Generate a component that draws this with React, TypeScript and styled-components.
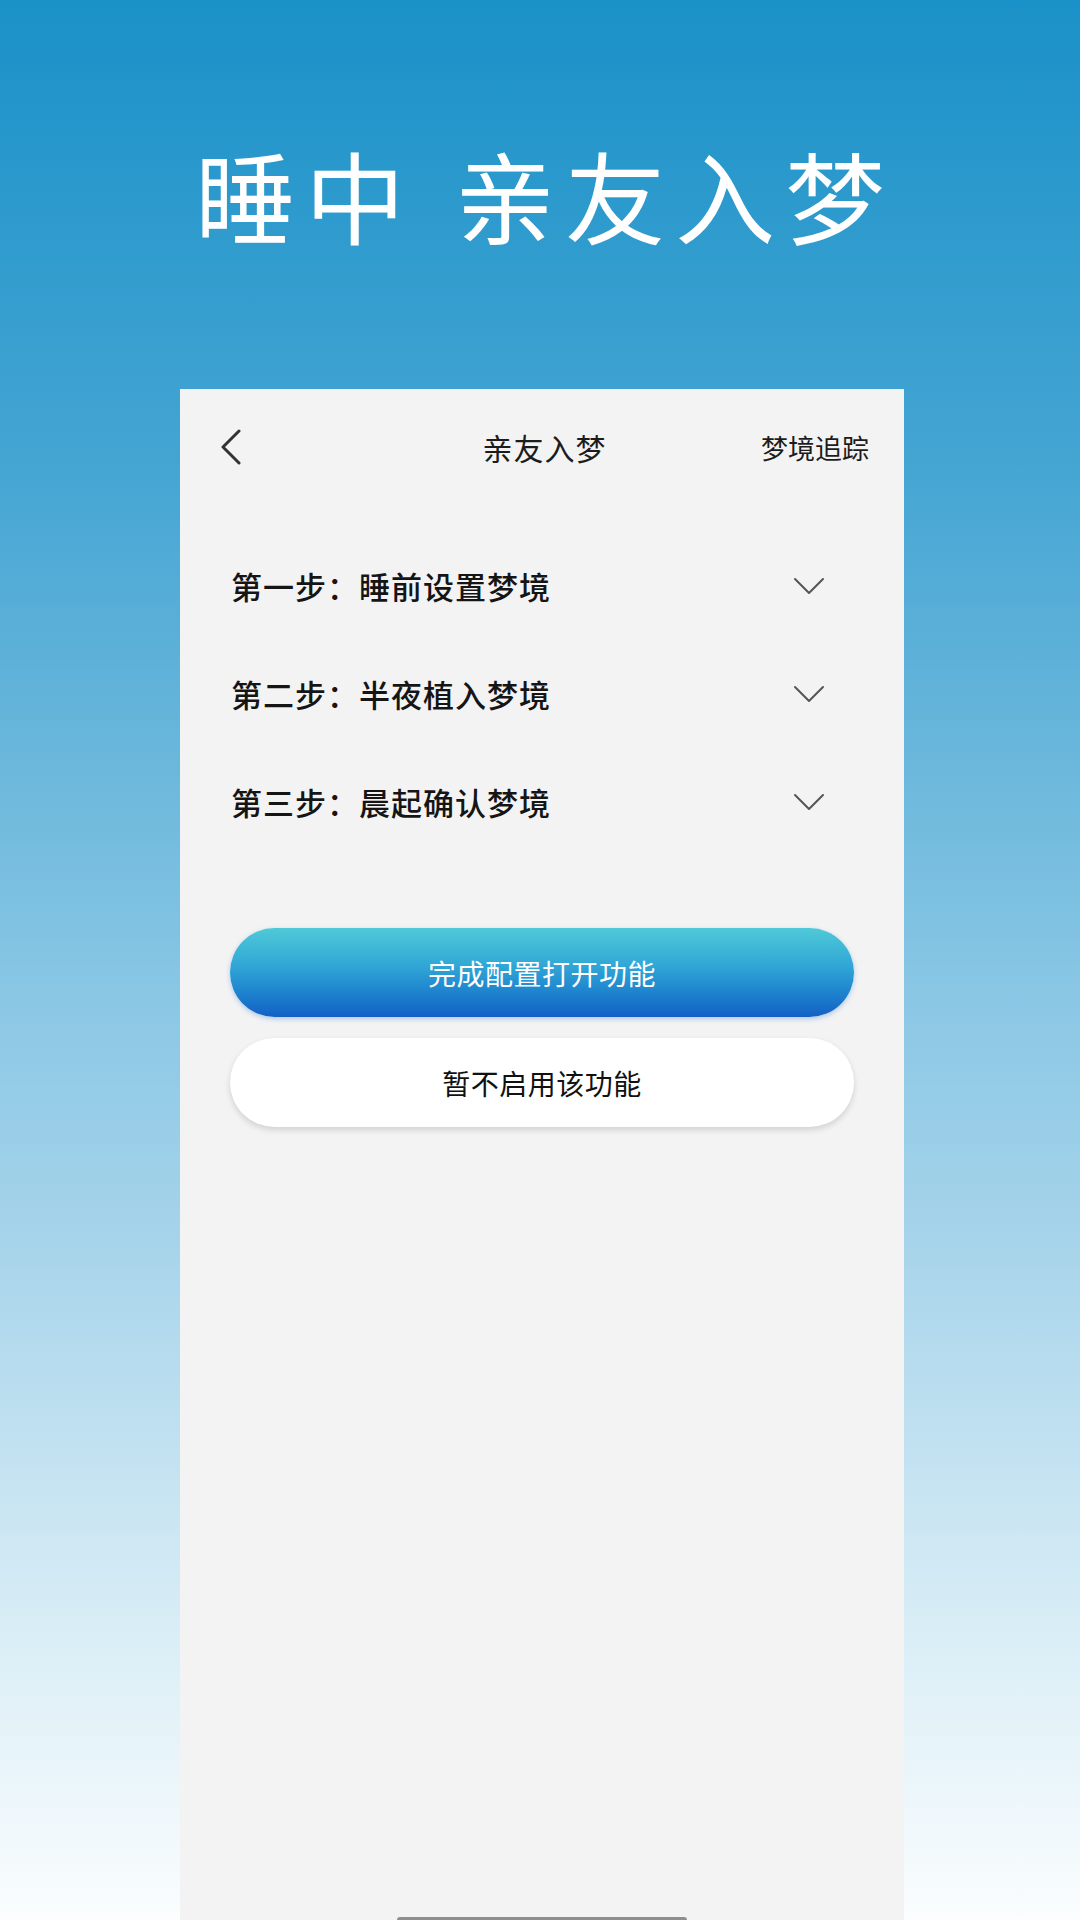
import * as React from 'react';
import styled, { createGlobalStyle } from 'styled-components';

const GlobalStyle = createGlobalStyle`
  html, body {
    margin: 0;
    padding: 0;
  }
  body {
    font-family: "Noto Sans CJK SC", "Noto Sans", sans-serif;
  }
`;

const Page = styled.div`
  width: 1080px;
  height: 1920px;
  display: flex;
  flex-direction: column;
  overflow: hidden;
  background: linear-gradient(
    180deg,
    #1a91c8 0%,
    #44a5d3 24%,
    #70badd 42%,
    #8ac7e5 52%,
    #a5d3ea 64%,
    #c3e2f1 76%,
    #def0f7 87%,
    #fbfdfe 100%
  );
`;

const Hero = styled.header`
  height: 389px;
  box-sizing: border-box;
  padding: 144px 0 0 10px;
  display: flex;
  justify-content: center;
`;

const HeroTitle = styled.h1`
  margin: 0;
  font-size: 100px;
  line-height: 100px;
  font-weight: 400;
  color: #fff;
  letter-spacing: 10px;
  display: flex;
  gap: 40px;
`;

const Panel = styled.main`
  flex: 1;
  width: 724px;
  margin-left: 180px;
  background: #f3f3f3;
  display: flex;
  flex-direction: column;
`;

const NavBar = styled.div`
  height: 116px;
  display: grid;
  grid-template-columns: 1fr auto 1fr;
  align-items: center;
  padding: 0 35px 0 40px;
`;

const BackButton = styled.button`
  border: 0;
  background: none;
  padding: 0;
  width: 22px;
  height: 36px;
  justify-self: start;
  display: flex;
`;

const NavTitle = styled.div`
  font-size: 30px;
  color: #1c1c1c;
  letter-spacing: 1px;
`;

const NavAction = styled.div`
  justify-self: end;
  font-size: 27px;
  color: #1c1c1c;
`;

const StepList = styled.div`
  padding-top: 26px;
  display: flex;
  flex-direction: column;
`;

const StepRow = styled.div`
  height: 108px;
  display: flex;
  align-items: center;
  justify-content: space-between;
  padding: 0 79px 0 51px;
`;

const StepLabel = styled.span`
  font-size: 31px;
  font-weight: 500;
  color: #151515;
  letter-spacing: 1px;
`;

const Actions = styled.div`
  padding: 73px 50px 0;
  display: flex;
  flex-direction: column;
  gap: 21px;
`;

const PillButton = styled.button<{ $primary?: boolean }>`
  height: 89px;
  border: 0;
  border-radius: 45px;
  font-family: inherit;
  font-size: 28px;
  letter-spacing: 0.5px;
  color: ${(p) => (p.$primary ? '#fff' : '#111')};
  background: ${(p) =>
    p.$primary
      ? 'linear-gradient(180deg, #4fc9d8 0%, #32a9d6 40%, #1f86cf 70%, #1360c5 100%)'
      : '#fff'};
  box-shadow: ${(p) =>
    p.$primary ? '0 2px 5px rgba(40, 120, 210, 0.35)' : '0 3px 6px rgba(0, 0, 0, 0.14)'};
`;

const HomeIndicator = styled.div`
  margin-top: auto;
  align-self: center;
  width: 290px;
  height: 3px;
  border-radius: 3px 3px 0 0;
  background: #8e8e8e;
`;

const BackIcon = () => (
  <svg width="22" height="36" viewBox="0 0 22 36">
    <path d="M19 2 L3 18 L19 34" fill="none" stroke="#333" strokeWidth="3" strokeLinecap="round" strokeLinejoin="round" />
  </svg>
);

const ChevronDown = () => (
  <svg width="32" height="20" viewBox="0 0 32 20">
    <path d="M2 4 L16 18 L30 4" fill="none" stroke="#555" strokeWidth="2" strokeLinecap="round" strokeLinejoin="round" />
  </svg>
);

const steps = ['第一步：睡前设置梦境', '第二步：半夜植入梦境', '第三步：晨起确认梦境'];

export default function App() {
  return (
    <Page>
      <GlobalStyle />
      <Hero>
        <HeroTitle>
          <span>睡中</span>
          <span>亲友入梦</span>
        </HeroTitle>
      </Hero>
      <Panel>
        <NavBar>
          <BackButton aria-label="返回">
            <BackIcon />
          </BackButton>
          <NavTitle>亲友入梦</NavTitle>
          <NavAction>梦境追踪</NavAction>
        </NavBar>
        <StepList>
          {steps.map((s) => (
            <StepRow key={s}>
              <StepLabel>{s}</StepLabel>
              <ChevronDown />
            </StepRow>
          ))}
        </StepList>
        <Actions>
          <PillButton $primary>完成配置打开功能</PillButton>
          <PillButton>暂不启用该功能</PillButton>
        </Actions>
        <HomeIndicator />
      </Panel>
    </Page>
  );
}
